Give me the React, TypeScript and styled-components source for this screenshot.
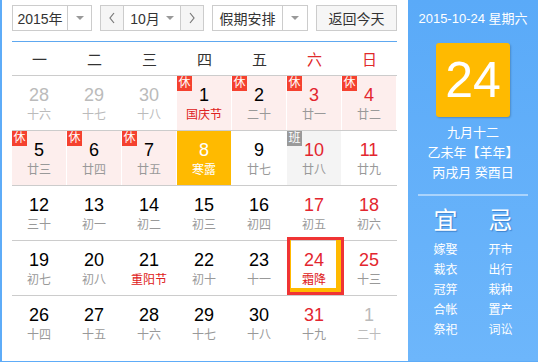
import styled, { createGlobalStyle } from "styled-components";

type Tone = "normal" | "red" | "muted" | "white" | "gray";

type Day = {
  d: number;
  l: string;
  num?: Tone;
  lunar?: Tone;
  bg?: "rest" | "work" | "today";
  badge?: "休" | "班";
  selected?: boolean;
};

const weeks: Day[][] = [
  [
    { d: 28, l: "十六", num: "muted", lunar: "muted" },
    { d: 29, l: "十七", num: "muted", lunar: "muted" },
    { d: 30, l: "十八", num: "muted", lunar: "muted" },
    { d: 1, l: "国庆节", lunar: "red", bg: "rest", badge: "休" },
    { d: 2, l: "二十", bg: "rest", badge: "休" },
    { d: 3, l: "廿一", num: "red", bg: "rest", badge: "休" },
    { d: 4, l: "廿二", num: "red", bg: "rest", badge: "休" },
  ],
  [
    { d: 5, l: "廿三", bg: "rest", badge: "休" },
    { d: 6, l: "廿四", bg: "rest", badge: "休" },
    { d: 7, l: "廿五", bg: "rest", badge: "休" },
    { d: 8, l: "寒露", num: "white", lunar: "white", bg: "today" },
    { d: 9, l: "廿七" },
    { d: 10, l: "廿八", num: "red", bg: "work", badge: "班" },
    { d: 11, l: "廿九", num: "red" },
  ],
  [
    { d: 12, l: "三十" },
    { d: 13, l: "初一" },
    { d: 14, l: "初二" },
    { d: 15, l: "初三" },
    { d: 16, l: "初四" },
    { d: 17, l: "初五", num: "red" },
    { d: 18, l: "初六", num: "red" },
  ],
  [
    { d: 19, l: "初七" },
    { d: 20, l: "初八" },
    { d: 21, l: "重阳节", lunar: "red" },
    { d: 22, l: "初十" },
    { d: 23, l: "十一" },
    { d: 24, l: "霜降", num: "red", lunar: "red", selected: true },
    { d: 25, l: "十三", num: "red" },
  ],
  [
    { d: 26, l: "十四" },
    { d: 27, l: "十五" },
    { d: 28, l: "十六" },
    { d: 29, l: "十七" },
    { d: 30, l: "十八" },
    { d: 31, l: "十九", num: "red" },
    { d: 1, l: "二十", num: "muted", lunar: "muted" },
  ],
];

const weekdays = ["一", "二", "三", "四", "五", "六", "日"];
const good = ["嫁娶", "裁衣", "冠笄", "合帐", "祭祀"];
const bad = ["开市", "出行", "栽种", "置产", "词讼"];

function Chevron({ dir }: { dir: "left" | "right" }) {
  return (
    <svg width="8" height="12" viewBox="0 0 8 12">
      <polyline
        points={dir === "left" ? "6,1 2,6 6,11" : "2,1 6,6 2,11"}
        fill="none"
        stroke="#777"
        strokeWidth="1.2"
      />
    </svg>
  );
}

export default function App() {
  return (
    <>
      <Global />
      <Widget>
        <Main>
          <Toolbar>
            <Select $w={80} $textW={55}>
              <SelectText>2015年</SelectText>
              <Arrow />
            </Select>
            <MonthGroup>
              <StepButton>
                <Chevron dir="left" />
              </StepButton>
              <MonthText>
                10月
                <Caret />
              </MonthText>
              <StepButton>
                <Chevron dir="right" />
              </StepButton>
            </MonthGroup>
            <Select $w={96} $textW={70}>
              <SelectText>假期安排</SelectText>
              <Arrow />
            </Select>
            <TodayButton>返回今天</TodayButton>
          </Toolbar>

          <WeekHead>
            {weekdays.map((w, i) => (
              <HeadCell key={w} $red={i >= 5}>
                {w}
              </HeadCell>
            ))}
          </WeekHead>

          {weeks.map((week, wi) => (
            <WeekRow key={wi} $last={wi === weeks.length - 1}>
              {week.map((day, di) => (
                <Cell key={di} $bg={day.bg} $selected={day.selected}>
                  {day.badge && <Badge $work={day.badge === "班"}>{day.badge}</Badge>}
                  <Num $tone={day.num ?? "normal"}>{day.d}</Num>
                  <Lunar $tone={day.lunar ?? "gray"}>{day.l}</Lunar>
                </Cell>
              ))}
            </WeekRow>
          ))}
        </Main>

        <Side>
          <DateTitle>2015-10-24 星期六</DateTitle>
          <BigDay>24</BigDay>
          <LunarInfo>
            <div>九月十二</div>
            <div>乙未年【羊年】</div>
            <div>丙戌月 癸酉日</div>
          </LunarInfo>
          <Divider />
          <Advice>
            <AdviceCol>
              <AdviceHead>宜</AdviceHead>
              {good.map((g) => (
                <AdviceItem key={g}>{g}</AdviceItem>
              ))}
            </AdviceCol>
            <AdviceCol>
              <AdviceHead>忌</AdviceHead>
              {bad.map((b) => (
                <AdviceItem key={b}>{b}</AdviceItem>
              ))}
            </AdviceCol>
          </Advice>
        </Side>
      </Widget>
    </>
  );
}

/* styles */

const Global = createGlobalStyle`
  body {
    margin: 0;
    background: #fff;
    font-family: "Liberation Sans", "Noto Sans CJK SC", sans-serif;
  }
`;

const Widget = styled.div`
  display: flex;
  width: 538px;
  height: 362px;
  box-sizing: border-box;
  border-left: 2px solid #5eacf8;
  border-bottom: 1px solid #5eacf8;
`;

const Main = styled.div`
  width: 406px;
  padding: 0 11px 0 10px;
  box-sizing: border-box;
`;

const Toolbar = styled.div`
  display: flex;
  gap: 8px;
  height: 42px;
  padding-top: 5px;
  box-sizing: border-box;
  border-bottom: 1px solid #5ea8f0;
`;

const Select = styled.div<{ $w: number; $textW: number }>`
  display: grid;
  grid-template-columns: ${(p) => p.$textW}px 1fr;
  width: ${(p) => p.$w}px;
  height: 26px;
  box-sizing: border-box;
  border: 1px solid #ccc;
  background: #fff;
`;

const SelectText = styled.div`
  display: flex;
  align-items: center;
  justify-content: center;
  border-right: 1px solid #ccc;
  font-size: 14px;
  color: #333;
`;

const Arrow = styled.div`
  display: flex;
  align-items: center;
  justify-content: center;
  &::after {
    content: "";
    border-left: 4px solid transparent;
    border-right: 4px solid transparent;
    border-top: 4px solid #999;
  }
`;

const MonthGroup = styled.div`
  display: grid;
  grid-template-columns: 22px 1fr 22px;
  width: 104px;
  height: 26px;
  box-sizing: border-box;
  border: 1px solid #ccc;
`;

const StepButton = styled.div`
  display: flex;
  align-items: center;
  justify-content: center;
  background: #f5f5f5;
`;

const MonthText = styled.div`
  display: flex;
  align-items: center;
  justify-content: center;
  gap: 6px;
  border-left: 1px solid #ccc;
  border-right: 1px solid #ccc;
  font-size: 14px;
  color: #333;
`;

const Caret = styled.span`
  border-left: 4px solid transparent;
  border-right: 4px solid transparent;
  border-top: 4px solid #999;
`;

const TodayButton = styled.div`
  display: flex;
  align-items: center;
  justify-content: center;
  width: 81px;
  height: 26px;
  box-sizing: border-box;
  border: 1px solid #ccc;
  background: #f6f6f6;
  font-size: 14px;
  color: #333;
`;

const WeekHead = styled.div`
  display: grid;
  grid-template-columns: repeat(7, 55px);
  height: 34px;
  box-sizing: border-box;
  border-bottom: 1px solid #ccc;
`;

const HeadCell = styled.div<{ $red: boolean }>`
  display: flex;
  align-items: center;
  justify-content: center;
  font-size: 15px;
  color: ${(p) => (p.$red ? "#e02a2a" : "#333")};
`;

const WeekRow = styled.div<{ $last: boolean }>`
  display: grid;
  grid-template-columns: repeat(7, 55px);
  border-bottom: ${(p) => (p.$last ? "none" : "1px solid #ccc")};
`;

const cellBg = {
  rest: "#fdeeed",
  work: "#f4f4f4",
  today: "#ffba00",
};

const Cell = styled.div<{ $bg?: "rest" | "work" | "today"; $selected?: boolean }>`
  position: relative;
  height: 54px;
  margin-right: 1px;
  text-align: center;
  background: ${(p) => (p.$bg ? cellBg[p.$bg] : "transparent")};

  ${(p) =>
    p.$selected &&
    `
    &::after {
      content: "";
      position: absolute;
      left: 0;
      top: -4px;
      width: 57px;
      height: 58px;
      box-sizing: border-box;
      border: 3px solid #f03434;
      box-shadow: inset -5px -4px 0 #ffba00, inset 1px 0 0 #ffba00;
    }
  `}
`;

const toneColor: Record<Tone, string> = {
  normal: "#000",
  red: "#e3262f",
  muted: "#bbb",
  white: "#fff",
  gray: "#999",
};

const Num = styled.div<{ $tone: Tone }>`
  padding-top: 9px;
  font-size: 18px;
  line-height: 20px;
  color: ${(p) => toneColor[p.$tone]};
`;

const Lunar = styled.div<{ $tone: Tone }>`
  margin-top: 2px;
  font-size: 12px;
  line-height: 16px;
  color: ${(p) => (p.$tone === "red" ? "#de2020" : toneColor[p.$tone])};
`;

const Badge = styled.div<{ $work: boolean }>`
  position: absolute;
  top: 0;
  left: 0;
  width: 15px;
  height: 15px;
  font-size: 12px;
  line-height: 15px;
  color: #fff;
  background: ${(p) => (p.$work ? "#9a9a9a" : "#f5412f")};
`;

const Side = styled.div`
  flex: 1;
  display: flex;
  flex-direction: column;
  align-items: center;
  background: linear-gradient(#5aaaf8, #6db6fb);
  color: #fff;
`;

const DateTitle = styled.div`
  margin-top: 10px;
  font-size: 13px;
  line-height: 18px;
`;

const BigDay = styled.div`
  display: flex;
  align-items: center;
  justify-content: center;
  margin-top: 15px;
  width: 74px;
  height: 74px;
  border-radius: 3px;
  background: #ffba00;
  box-shadow: 1px 1px 2px rgba(0, 0, 0, 0.2);
  font-size: 50px;
  line-height: 1;
`;

const LunarInfo = styled.div`
  margin-top: 6px;
  font-size: 13px;
  line-height: 20px;
  text-align: center;
`;

const Divider = styled.div`
  margin-top: 11px;
  width: 110px;
  height: 2px;
  background: rgba(255, 255, 255, 0.45);
`;

const Advice = styled.div`
  display: grid;
  grid-template-columns: 55px 55px;
  margin-top: 10px;
`;

const AdviceCol = styled.div`
  display: flex;
  flex-direction: column;
  align-items: center;
`;

const AdviceHead = styled.div`
  font-size: 24px;
  line-height: 30px;
  margin-bottom: 4px;
  text-shadow: 1px 1px 1px rgba(0, 60, 140, 0.4);
`;

const AdviceItem = styled.div`
  font-size: 12px;
  line-height: 20px;
`;
